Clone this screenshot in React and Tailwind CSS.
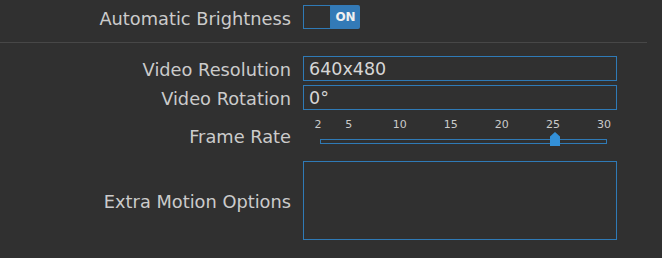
import React from "react";

const ticks = [2, 5, 10, 15, 20, 25, 30];
const pos = (v) => 318 + (v - 2) * (286 / 28);

export default function App() {
  return (
    <div
      className="w-[662px] h-[258px] bg-[#303030] overflow-hidden text-[#cbcbcb]"
      style={{ fontFamily: '"DejaVu Sans", "Noto Sans", sans-serif' }}
    >
      <div className="flex items-center h-[24px] mt-[5px]">
        <div className="w-[303px] pr-[12px] pt-[3px] text-right text-[17.8px] leading-none">
          Automatic Brightness
        </div>
        <div className="flex w-[57px] h-[24px] rounded-r-[2px] overflow-hidden">
          <div className="w-[28px] h-full border border-[#2f7ab6]" />
          <div className="flex-1 h-full bg-[#337ab7] flex items-center justify-center text-[12px] font-bold text-[#f0f0f0]">
            ON
          </div>
        </div>
      </div>

      <div className="mt-[13px] h-px w-[647px] bg-[#474747]" />

      <div className="mt-[13px] flex flex-col gap-[4px]">
        <div className="flex items-center h-[25px]">
          <div className="w-[303px] pr-[12px] pt-[3px] text-right text-[17.8px] leading-none">
            Video Resolution
          </div>
          <div className="w-[314px] h-[25px] border border-[#2f7ab6] flex items-center px-[5px] pt-[1px] text-[17.5px] text-[#d6d6d6]">
            640x480
          </div>
        </div>
        <div className="flex items-center h-[25px]">
          <div className="w-[303px] pr-[12px] pt-[3px] text-right text-[17.8px] leading-none">
            Video Rotation
          </div>
          <div className="w-[314px] h-[25px] border border-[#2f7ab6] flex items-center px-[5px] pt-[1px] text-[17.5px] text-[#d6d6d6]">
            0°
          </div>
        </div>
      </div>

      <div className="flex items-center h-[40px] mt-[0px]">
        <div className="w-[303px] pr-[12px] text-right text-[17.8px] leading-none pt-[14px]">
          Frame Rate
        </div>
        <div className="relative w-[330px] h-[40px]">
          {ticks.map((t) => (
            <span
              key={t}
              className="absolute top-[9px] text-[11px] leading-none -translate-x-1/2 text-[#cbcbcb]"
              style={{ left: pos(t) - 303 }}
            >
              {t}
            </span>
          ))}
          <div className="absolute left-[17px] top-[29px] w-[287px] h-[5px] border border-[#2f7ab6]" />
          <svg
            className="absolute left-[247px] top-[22px]"
            width="10"
            height="14"
            viewBox="0 0 10 14"
          >
            <path d="M0 4.5 L5 0 L10 4.5 L10 14 L0 14 Z" fill="#3390d8" />
          </svg>
        </div>
      </div>

      <div className="flex items-center mt-[11px]">
        <div className="w-[303px] pr-[12px] pt-[3px] text-right text-[17.8px] leading-none">
          Extra Motion Options
        </div>
        <div className="w-[314px] h-[79px] border border-[#2f7ab6]" />
      </div>
    </div>
  );
}
